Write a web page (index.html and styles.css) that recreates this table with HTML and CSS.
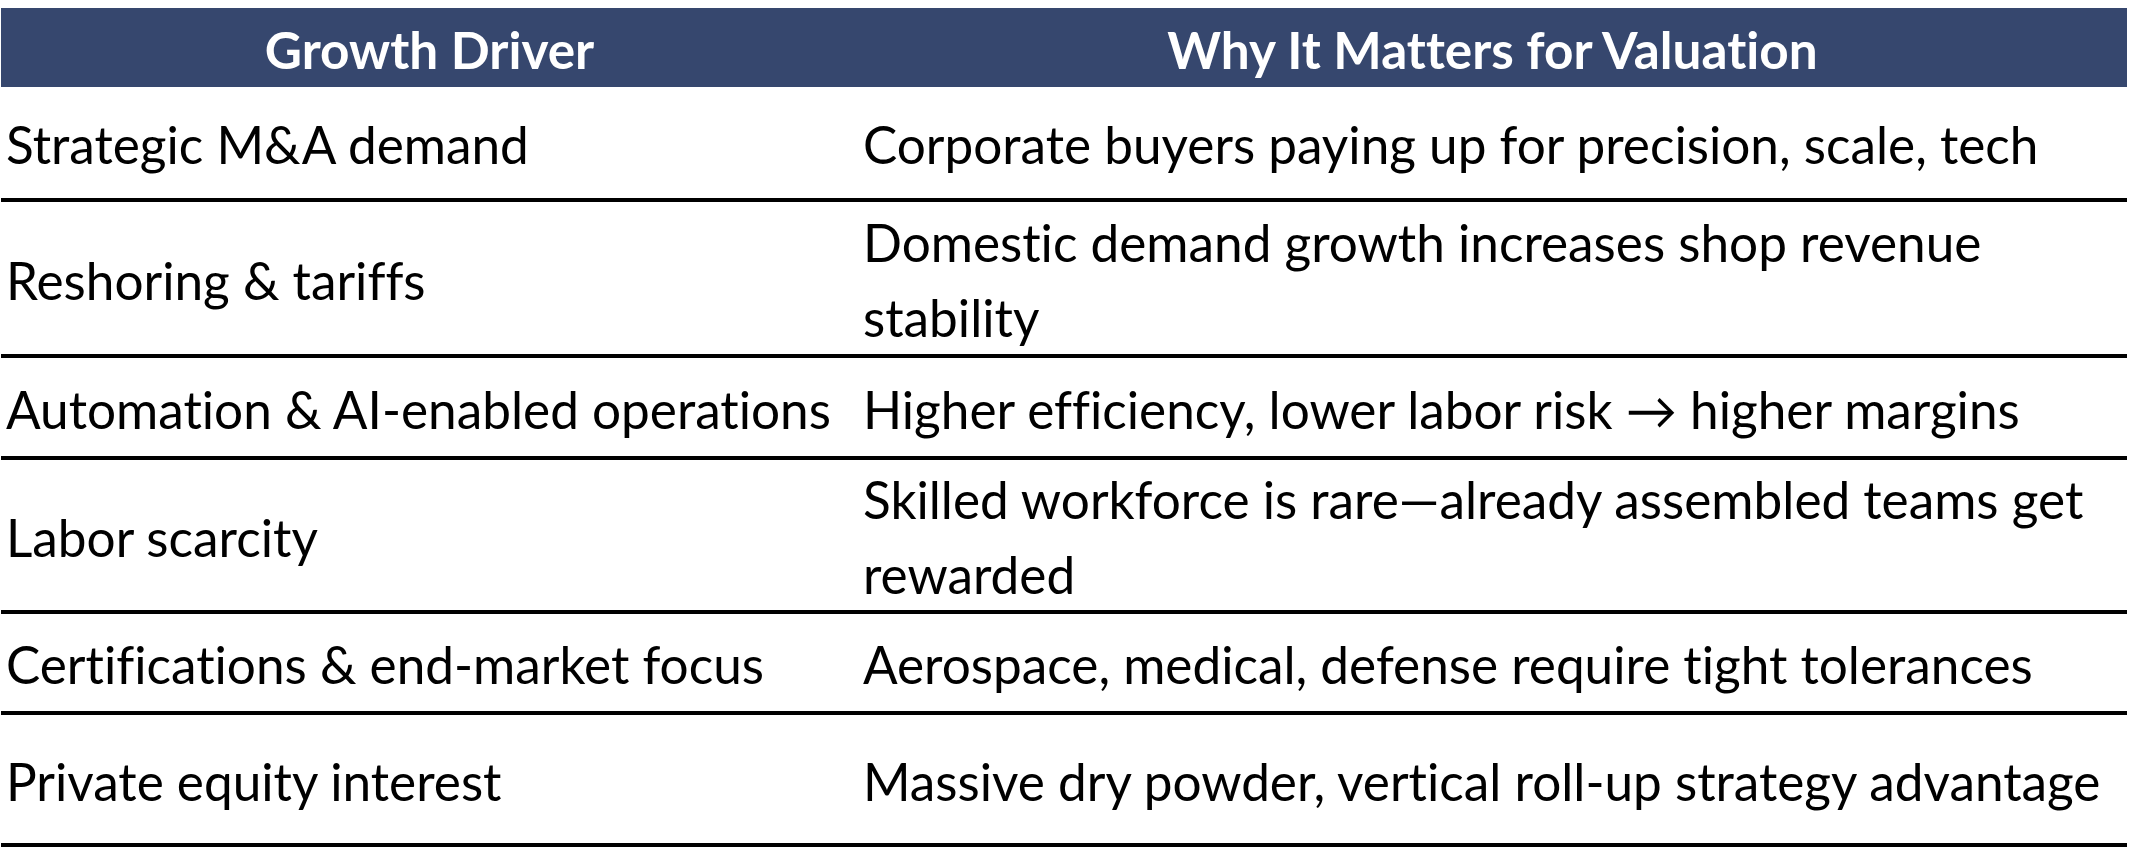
FILE: index.html
```html
<!DOCTYPE html>
<html lang="en">
<head>
<meta charset="utf-8">
<title>Growth Drivers</title>
<link rel="stylesheet" href="styles.css">
</head>
<body>
<div class="sheet">
  <div class="drivers">
    <div class="cell head">Growth Driver</div>
    <div class="cell head">Why It Matters for Valuation</div>

    <div class="cell r1">Strategic M&amp;A demand</div>
    <div class="cell r1 why">Corporate buyers paying up for precision, scale, tech</div>

    <div class="cell r2">Reshoring &amp; tariffs</div>
    <div class="cell r2 why">Domestic demand growth increases shop revenue stability</div>

    <div class="cell r3">Automation &amp; AI-enabled operations</div>
    <div class="cell r3 why">Higher efficiency, lower labor risk → higher margins</div>

    <div class="cell r4">Labor scarcity</div>
    <div class="cell r4 why">Skilled workforce is rare—already assembled teams get rewarded</div>

    <div class="cell r5">Certifications &amp; end-market focus</div>
    <div class="cell r5 why">Aerospace, medical, defense require tight tolerances</div>

    <div class="cell r6">Private equity interest</div>
    <div class="cell r6 why">Massive dry powder, vertical roll-up strategy advantage</div>
  </div>
</div>
</body>
</html>
```

FILE: styles.css
```css
html, body {
  margin: 0;
  padding: 0;
  background: #ffffff;
}

.sheet {
  padding: 8px 8px 0 1px;
}

.drivers {
  width: 2126px;
  display: grid;
  grid-template-columns: 857px 1fr;
  grid-template-rows: 79px 115px 156px 102px 154px 101px 132px;
  font-family: "Lato", "Liberation Sans", sans-serif;
  font-size: 51.3px;
  font-variant-ligatures: none;
  font-feature-settings: "liga" 0, "dlig" 0;
  color: #000000;
}

.cell {
  display: flex;
  align-items: center;
  box-sizing: border-box;
  padding: 4px 6px 0 5px;
  line-height: 75px;
  border-bottom: 4px solid #000000;
}

.why {
  padding-left: 5px;
}

.head {
  background: #36476e;
  color: #ffffff;
  font-weight: 700;
  justify-content: center;
  border-bottom: none;
  padding: 4px 0 0 0;
}
```
